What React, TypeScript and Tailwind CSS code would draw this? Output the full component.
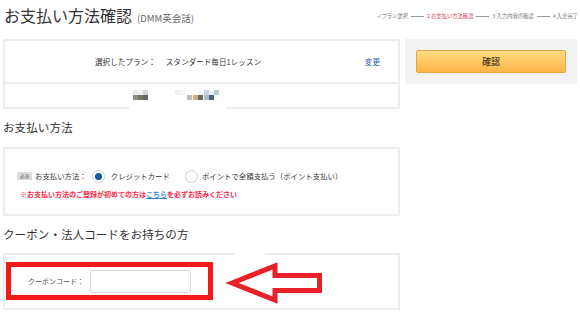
import React from "react";

const font = { fontFamily: '"Noto Sans CJK JP", "Noto Sans", sans-serif' };

function Mosaic() {
  const row1 = [
    ["#ececec", 133], ["#f3f3f3", 138], ["#d6d6d6", 143],
    ["#f0f0f0", 175], ["#f6f6f6", 180],
    ["#f4f4f4", 198], ["#c6d4de", 204], ["#eef2f5", 209], ["#b8c9d6", 214],
  ] as const;
  const row2 = [
    ["#8c8c8c", 133], ["#7a7668", 138], ["#676767", 143],
    ["#bdbdbd", 187],
    ["#d9a878", 193], ["#6b6b66", 198], ["#a7bccd", 204], ["#4c6279", 209], ["#fdfdee", 214],
  ] as const;
  return (
    <div className="relative h-[23px]">
      {row1.map(([c, x], i) => (
        <span key={"a" + i} className="absolute top-[6px] h-[5px] w-[5px]" style={{ left: x - 5, background: c }} />
      ))}
      {row2.map(([c, x], i) => (
        <span key={"b" + i} className="absolute top-[11px] h-[5px] w-[5px]" style={{ left: x - 5, background: c }} />
      ))}
      <span className="absolute left-[124px] top-[22px] h-[4px] w-[96px] bg-white" />
    </div>
  );
}

function Radio({ checked }: { checked?: boolean }) {
  return (
    <span className="flex h-[13px] w-[13px] items-center justify-center rounded-full border border-[#cfcfcf] bg-white">
      {checked && <span className="h-[7px] w-[7px] rounded-full bg-[#0b5aa2]" />}
    </span>
  );
}

export default function App() {
  return (
    <div className="relative h-[314px] w-[580px] overflow-hidden bg-white text-[#333]" style={font}>
      {/* Header */}
      <div className="flex h-[39px] items-start justify-between pl-[4px] pr-[2px]">
        <div className="mt-[5px] flex items-baseline">
          <span className="text-[16px] leading-[20px] tracking-[0px]">お支払い方法確認</span>
          <span className="ml-[5px] text-[9.5px] text-[#666]">(DMM英会話)</span>
        </div>
        <div className="mt-[11px] flex items-center text-[5.3px] leading-[10px] text-[#777]">
          <span>✓プラン選択</span>
          <span className="mx-[3px] h-px w-[13px] bg-[#999]" />
          <span className="text-[#e0364f]">2 お支払い方法確認</span>
          <span className="mx-[3px] h-px w-[13px] bg-[#999]" />
          <span>3 入力内容の確認</span>
          <span className="mx-[3px] h-px w-[13px] bg-[#999]" />
          <span>4 入会完了</span>
        </div>
      </div>

      <div className="flex pl-[3px]">
        {/* Left column */}
        <div className="w-[397px]">
          <div className="border-2 border-[#ededed]">
            <div className="flex h-[41px] items-center pl-[90px] pr-[18px] text-[7.6px]">
              <span>選択したプラン：</span>
              <span className="ml-[10px]">スタンダード毎日1レッスン</span>
              <span className="ml-auto text-[#2a5fa8]">変更</span>
            </div>
            <div className="h-[2px] bg-[#ededed]" />
            <Mosaic />
          </div>

          <div className="flex h-[38px] items-center text-[11.6px]">お支払い方法</div>

          <div className="h-[69px] border-2 border-[#ededed] pl-[12px]">
            <div className="mt-[20px] flex h-[14px] items-center text-[7.4px]">
              <span className="mr-[3px] flex h-[8px] w-[15px] items-center justify-center bg-[#dedede] text-[4.5px] text-[#666]">必須</span>
              <span>お支払い方法：</span>
              <span className="ml-[5px]"><Radio checked /></span>
              <span className="ml-[6px]">クレジットカード</span>
              <span className="ml-[15px]"><Radio /></span>
              <span className="ml-[4px]">ポイントで全額支払う（ポイント支払い）</span>
            </div>
            <div className="mt-[6px] pl-[3px] text-[7px] font-bold text-[#ff1f45]">
              ※お支払い方法のご登録が初めての方は
              <span className="text-[#3b8fe0] underline">こちら</span>
              を必ずお読みください
            </div>
          </div>

          <div className="flex h-[37px] items-center text-[11.6px]">クーポン・法人コードをお持ちの方</div>

          <div className="relative h-[57px] border-2 border-[#ededed] pl-[1px] pt-[7px]">
            <span className="absolute left-[229px] top-[-2px] h-[2px] w-[31px] bg-white" />
            <div className="flex h-[38px] w-[207px] items-center border-[5px] border-[#f01a1a] pl-[17px]">
              <span className="text-[7px] text-[#555]">クーポンコード：</span>
              <span className="ml-[6px] h-[23px] w-[101px] rounded-[2px] border border-[#d8d8d8] bg-white" />
            </div>
          </div>
        </div>

        {/* Right column */}
        <div className="ml-[5px] w-[172px]">
          <div className="h-[45px] bg-[#f3f3f3] px-[11px] pt-[11px]">
            <div className="flex h-[23px] items-center justify-center rounded-[2px] border border-[#e9a443] bg-gradient-to-b from-[#ffdb80] to-[#fcb445] text-[9px] font-medium text-[#4a3c22]">
              確認
            </div>
          </div>
        </div>
      </div>

      {/* Annotation arrow */}
      <svg className="absolute left-0 top-0" width="580" height="314">
        <polygon
          points="232,283 275,266 275,275.5 319.5,275.5 319.5,290.5 275,290.5 275,300"
          fill="white"
          stroke="#e8202a"
          strokeWidth="5"
          strokeLinejoin="miter"
        />
      </svg>
    </div>
  );
}
